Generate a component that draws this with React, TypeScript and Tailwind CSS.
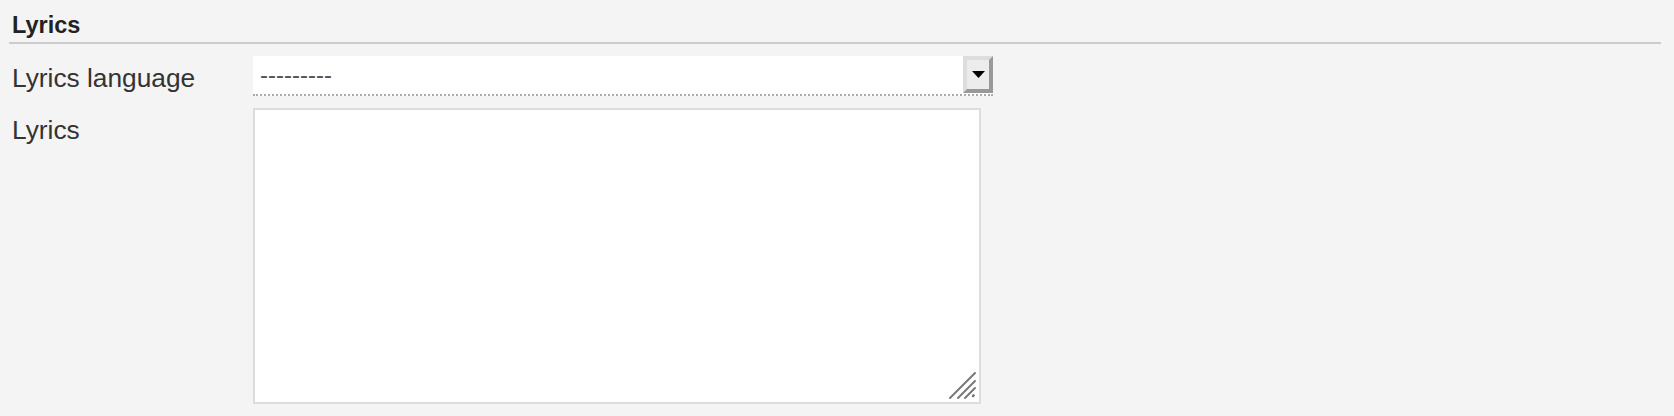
import React from "react";

export default function App() {
  return (
    <div
      className="w-full h-[416px] bg-[#f4f4f4] overflow-hidden"
      style={{ fontFamily: '"Liberation Sans", Arial, Helvetica, sans-serif' }}
    >
      <div className="ml-[9px] mr-[13px] border-b-2 border-[#cccccc] pt-[12px] pb-[4px] pl-[3px]">
        <h2 className="text-[23.5px] leading-[26px] font-bold text-[#222222]">Lyrics</h2>
      </div>

      <div className="flex pl-[12px] mt-[12px]">
        <label className="w-[241px] pt-[7px] text-[26.3px] leading-[30px] text-[#333333]">
          Lyrics language
        </label>
        <div className="w-[740px] h-[40px] bg-white border-b-2 border-dotted border-[#aaaaaa] flex items-stretch">
          <div className="flex-1 flex items-center pl-[7px] text-[24px] text-[#555555]">---------</div>
          <div className="w-[30px] h-[37px] bg-[#ececec] border-4 border-t-[#dddddd] border-l-[#dddddd] border-r-[#999999] border-b-[#999999] flex items-center justify-center">
            <svg width="13" height="7" viewBox="0 0 13 7">
              <path d="M0 0 L13 0 L6.5 7 Z" fill="#000" />
            </svg>
          </div>
        </div>
      </div>

      <div className="flex pl-[12px] mt-[12px]">
        <label className="w-[241px] pt-[7px] text-[26.3px] leading-[30px] text-[#333333]">
          Lyrics
        </label>
        <div className="relative w-[728px] h-[296px] bg-white border-2 border-[#dcdcdc]">
          <svg
            className="absolute right-[2px] bottom-[2px]"
            width="30"
            height="30"
            viewBox="0 0 30 30"
          >
            <g stroke="#777777" strokeWidth="2" strokeLinecap="round">
              <line x1="3" y1="28" x2="28" y2="3" />
              <line x1="11" y1="28" x2="28" y2="11" />
              <line x1="18" y1="28" x2="28" y2="18" />
              <line x1="26" y1="26" x2="26.6" y2="25.4" strokeWidth="2.5" />
            </g>
          </svg>
        </div>
      </div>
    </div>
  );
}
